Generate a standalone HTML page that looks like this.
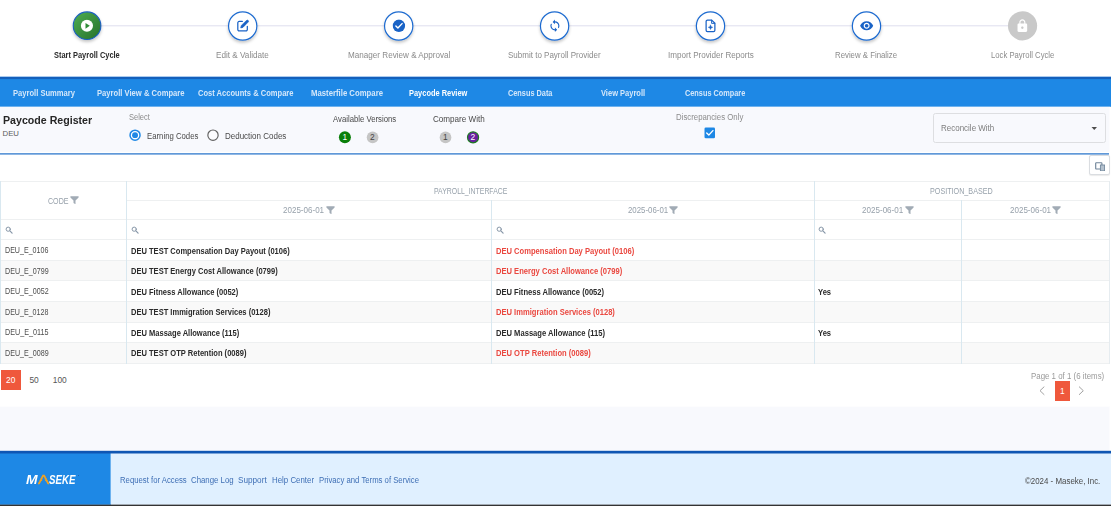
<!DOCTYPE html>
<html lang="en">
<head>
<meta charset="utf-8">
<title>Paycode Register</title>
<style>
html,body{margin:0;padding:0}
body{width:1111px;height:507px;position:relative;overflow:hidden;background:#fff;font-family:"Liberation Sans", sans-serif;-webkit-font-smoothing:antialiased}
.a{position:absolute}
.t{position:absolute;white-space:nowrap;line-height:1;margin:0;transform-origin:0 0;text-decoration:none}
.sb{font-weight:700;color:#2a2a2a}
.sg{color:#8b8b8b}
.nv{font-weight:700;color:#d4e7fa}
.nva{font-weight:700;color:#fff}
.h1{font-weight:700;color:#262626}
.sub{color:#5c5c5c}
.lab{color:#8c8c8c}
.lab2{color:#7d7d7d}
.opt{color:#4a4a4a}
.bw{color:#fff}
.bd{color:#444}
.th{color:#97a1ab}
.tdc{color:#4d4d4d}
.tdb{font-weight:700;color:#2b2b2b}
.tdr{font-weight:700;color:#ea4840}
.pw{color:#fff}
.pg{color:#555}
.pi{color:#9a9a9a}
.fl{color:#3f6fb5}
.fc{color:#4a4a4a}
</style>
</head>
<body>
<header aria-label="Payroll cycle steps">
<svg class="a" style="left:0;top:0" width="1111" height="52" viewBox="0 0 1111 52"><defs><filter id="sh" x="-30%" y="-30%" width="160%" height="180%"><feDropShadow dx="0" dy="1.900" stdDeviation="1.700" flood-color="#000" flood-opacity=".23"/></filter><linearGradient id="gg" x1="0" y1="0" x2="1" y2="1"><stop offset=".1" stop-color="#4aa84e"/><stop offset=".85" stop-color="#2c7a31"/></linearGradient></defs><rect x="87" y="25.300" width="935" height="1" fill="#dfdfee"/><circle cx="87.050" cy="25.700" r="13.800" fill="url(#gg)" stroke="#1b60c0" stroke-width="1.100" filter="url(#sh)"/><svg x="80.45" y="19.30" width="13.00" height="13.00" viewBox="0 0 24 24"><circle cx="12" cy="12" r="11.200" fill="#fff"/><path d="M9.300 6.700v10.600l8-5.300z" fill="#2e8b36"/></svg><circle cx="242.70" cy="26" r="14.150" fill="#fff" stroke="#1d6bd0" stroke-width="1.200" filter="url(#sh)"/><circle cx="398.70" cy="26" r="14.150" fill="#fff" stroke="#1d6bd0" stroke-width="1.200" filter="url(#sh)"/><circle cx="554.60" cy="26" r="14.150" fill="#fff" stroke="#1d6bd0" stroke-width="1.200" filter="url(#sh)"/><circle cx="710.50" cy="26" r="14.150" fill="#fff" stroke="#1d6bd0" stroke-width="1.200" filter="url(#sh)"/><circle cx="866.50" cy="26" r="14.150" fill="#fff" stroke="#1d6bd0" stroke-width="1.200" filter="url(#sh)"/><svg x="236.10" y="19.00" width="13.60" height="13.60" viewBox="0 0 24 24"><g fill="none" stroke="#1a63c6" stroke-linecap="round" stroke-linejoin="round"><path d="M11 4.300H5.400a2.400 2.400 0 0 0-2.400 2.400v12a2.400 2.400 0 0 0 2.400 2.400h12a2.400 2.400 0 0 0 2.400-2.400V13" stroke-width="2.200"/><path d="M18.400 2.600a2.050 2.050 0 0 1 2.900 2.900L12 14.800l-3.800.9.900-3.800z" fill="#1a63c6" stroke-width="1.300"/></g></svg><svg x="392.38" y="19.27" width="13.05" height="13.05" viewBox="0 0 24 24"><circle cx="12" cy="12" r="11.400" fill="#1a63c6"/><path d="M6.400 12.400l3.800 3.800 7.600-8.200" fill="none" stroke="#fff" stroke-width="2.600" stroke-linecap="round" stroke-linejoin="round"/></svg><svg x="548.10" y="19.05" width="13.60" height="13.60" viewBox="0 0 24 24"><path fill="#1a63c6" d="M12 4V1L8 5l4 4V6c3.310 0 6 2.690 6 6 0 1.010-.25 1.970-.7 2.800l1.460 1.460C19.540 15.030 20 13.570 20 12c0-4.420-3.580-8-8-8zm0 14c-3.310 0-6-2.690-6-6 0-1.010.25-1.970.7-2.800L5.240 7.740C4.460 8.970 4 10.430 4 12c0 4.420 3.580 8 8 8v3l4-4-4-4v3z"/></svg><svg x="703.30" y="18.65" width="14.40" height="14.40" viewBox="0 0 24 24"><g fill="none" stroke="#1a63c6" stroke-linecap="round" stroke-linejoin="round"><path d="M14 2.400H7a2.300 2.300 0 0 0-2.300 2.300v14.600a2.300 2.300 0 0 0 2.300 2.300h10a2.300 2.300 0 0 0 2.300-2.300V7.700z" stroke-width="2.100"/><path d="M13.800 2.600v5.300h5.300" stroke-width="1.600"/><path d="M12 10.800l1.050 2.550 2.550 1.050-2.550 1.050L12 18l-1.050-2.550L8.400 14.400l2.550-1.050z" fill="#1a63c6" stroke-width=".9"/></g></svg><svg x="859.50" y="18.55" width="14.30" height="14.30" viewBox="0 0 24 24"><path fill="#1a63c6" d="M12 4.500C7 4.500 2.730 7.610 1 12c1.730 4.390 6 7.500 11 7.500s9.270-3.110 11-7.500c-1.730-4.390-6-7.500-11-7.500zM12 17c-2.760 0-5-2.240-5-5s2.240-5 5-5 5 2.240 5 5-2.240 5-5 5zm0-8c-1.660 0-3 1.340-3 3s1.340 3 3 3 3-1.340 3-3-1.340-3-3-3z"/></svg><circle cx="1022.550" cy="25.800" r="14.600" fill="#c9c9c9"/><svg x="1015.10" y="18.65" width="14.50" height="14.50" viewBox="0 0 24 24"><path fill="#fff" d="M18 8h-1V6c0-2.760-2.240-5-5-5S7 3.240 7 6v2H6c-1.100 0-2 .9-2 2v10c0 1.100.9 2 2 2h12c1.100 0 2-.9 2-2V10c0-1.100-.9-2-2-2zm-6 9c-1.100 0-2-.9-2-2s.9-2 2-2 2 .9 2 2-.9 2-2 2zm3.100-9H8.900V6c0-1.710 1.390-3.100 3.100-3.100 1.710 0 3.100 1.390 3.100 3.100v2z"/></svg></svg>
<span class="t sb" style="left:54.38px;top:50.85px;font-size:8.5px;transform:scaleX(0.8752)">Start Payroll Cycle</span>
<span class="t sg" style="left:216.28px;top:50.85px;font-size:8.5px;transform:scaleX(0.9593)">Edit &amp; Validate</span>
<span class="t sg" style="left:347.58px;top:50.85px;font-size:8.5px;transform:scaleX(0.9547)">Manager Review &amp; Approval</span>
<span class="t sg" style="left:508.33px;top:50.85px;font-size:8.5px;transform:scaleX(0.9422)">Submit to Payroll Provider</span>
<span class="t sg" style="left:667.59px;top:50.85px;font-size:8.5px;transform:scaleX(0.9501)">Import Provider Reports</span>
<span class="t sg" style="left:835.21px;top:50.85px;font-size:8.5px;transform:scaleX(0.9188)">Review &amp; Finalize</span>
<span class="t sg" style="left:990.52px;top:50.85px;font-size:8.5px;transform:scaleX(0.9062)">Lock Payroll Cycle</span>
</header>
<nav aria-label="Payroll views">
<div class="a" style="left:0px;top:77px;width:1111px;height:29px;background:#1e88e5"></div><div class="a" style="left:0px;top:76px;width:1111px;height:1px;background:rgba(30,136,229,0.20)"></div><div class="a" style="left:0px;top:106px;width:1111px;height:1px;background:rgba(30,136,229,0.80)"></div>
<div class="a" style="left:0px;top:77px;width:1111px;height:2px;background:#1460bc"></div><div class="a" style="left:0px;top:76px;width:1111px;height:1px;background:rgba(20,96,188,0.20)"></div><div class="a" style="left:0px;top:79px;width:1111px;height:1px;background:rgba(20,96,188,0.10)"></div>
<a href="#" class="t nv" style="left:12.55px;top:88.90px;font-size:8.4px;transform:scaleX(0.9063)">Payroll Summary</a>
<a href="#" class="t nv" style="left:96.65px;top:88.90px;font-size:8.4px;transform:scaleX(0.9099)">Payroll View &amp; Compare</a>
<a href="#" class="t nv" style="left:198.27px;top:88.90px;font-size:8.4px;transform:scaleX(0.9026)">Cost Accounts &amp; Compare</a>
<a href="#" class="t nv" style="left:310.54px;top:88.90px;font-size:8.4px;transform:scaleX(0.9260)">Masterfile Compare</a>
<a href="#" class="t nva" style="left:409.36px;top:88.90px;font-size:8.4px;transform:scaleX(0.8889)">Paycode Review</a>
<a href="#" class="t nv" style="left:508.48px;top:88.90px;font-size:8.4px;transform:scaleX(0.8752)">Census Data</a>
<a href="#" class="t nv" style="left:601.20px;top:88.90px;font-size:8.4px;transform:scaleX(0.8964)">View Payroll</a>
<a href="#" class="t nv" style="left:685.08px;top:88.90px;font-size:8.4px;transform:scaleX(0.8745)">Census Compare</a>
</nav>
<section aria-label="Paycode Register filters">
<div class="a" style="left:0px;top:107px;width:1110px;height:44px;background:#f8f9fd"></div><div class="a" style="left:0px;top:106px;width:1110px;height:1px;background:rgba(248,249,253,0.20)"></div><div class="a" style="left:0px;top:151px;width:1110px;height:1px;background:rgba(248,249,253,0.90)"></div>
<div class="a" style="left:1109px;top:107px;width:1px;height:45px;background:rgba(255,255,255,.5)"></div>
<div class="a" style="left:0px;top:153px;width:1109px;height:1px;background:#6098d8"></div><div class="a" style="left:0px;top:154px;width:1109px;height:1px;background:rgba(96,152,216,0.70)"></div>
<svg class="a" style="left:0;top:107px" width="1111" height="46" viewBox="0 107 1111 46"><circle cx="135.050" cy="135.150" r="5" fill="#fff" stroke="#1e88e5" stroke-width="1.500"/><circle cx="135.050" cy="135.150" r="2.950" fill="#1e88e5"/><circle cx="213" cy="135.150" r="5.150" fill="#fcfcfe" stroke="#616161" stroke-width="1.150"/><circle cx="344.900" cy="137.300" r="6" fill="#0a7f0a"/><circle cx="372.600" cy="137.400" r="5.850" fill="#c5c5c5"/><circle cx="445.500" cy="137.400" r="5.850" fill="#c5c5c5"/><circle cx="473.050" cy="137.350" r="5.550" fill="#6a1fa0" stroke="#1d7a22" stroke-width="1.200"/><rect x="704.500" y="127.400" width="10.500" height="10.800" rx="1.300" fill="#1e88e5"/><path d="M706.700 133l2.100 2.100 4.100-4.500" fill="none" stroke="#fff" stroke-width="1.350" stroke-linecap="round" stroke-linejoin="round"/></svg>
<div class="a" style="left:933.3px;top:113px;width:172.5px;height:30px;box-sizing:border-box;border:1px solid #dddee1;border-radius:2.500px;background:#f8f9fd"></div>
<svg class="a" style="left:1091px;top:126px" width="7" height="5" viewBox="0 0 7 5"><path d="M.5 1h5.500L3.250 4z" fill="#4d4d4d"/></svg>
<div class="a" style="left:1089.3px;top:155.2px;width:20.3px;height:19.5px;box-sizing:border-box;border:1px solid #dadde1;border-radius:2px;background:#fff;box-shadow:0 .5px 1px rgba(0,0,0,.08)"></div>
<svg class="a" style="left:1094.5px;top:161.8px" width="10.500" height="9.500" viewBox="0 0 10.500 9.500"><rect x=".7" y=".7" width="6.200" height="6.300" rx=".6" fill="#fff" stroke="#6f8499" stroke-width="1.150"/><rect x="5.400" y="3" width="4.200" height="5.900" fill="#b4c1ce" stroke="#72879c" stroke-width=".9"/></svg>
<h1 class="t h1" style="left:3.45px;top:114.75px;font-size:10.7px;transform:scaleX(0.9938)">Paycode Register</h1>
<span class="t sub" style="left:2.50px;top:129.70px;font-size:7.8px">DEU</span>
<span class="t lab" style="left:129.15px;top:112.90px;font-size:8.4px;transform:scaleX(0.8967)">Select</span>
<span class="t opt" style="left:146.80px;top:131.90px;font-size:8.4px;transform:scaleX(0.9272)">Earning Codes</span>
<span class="t opt" style="left:224.98px;top:131.90px;font-size:8.4px;transform:scaleX(0.9549)">Deduction Codes</span>
<span class="t opt" style="left:332.90px;top:114.90px;font-size:8.4px;transform:scaleX(0.9250)">Available Versions</span>
<span class="t opt" style="left:432.82px;top:114.90px;font-size:8.4px;transform:scaleX(0.9676)">Compare With</span>
<span class="t lab" style="left:675.80px;top:112.90px;font-size:8.4px;transform:scaleX(0.9333)">Discrepancies Only</span>
<span class="t lab2" style="left:941.18px;top:123.90px;font-size:8.4px;transform:scaleX(0.9541)">Reconcile With</span>
<span class="t bw" style="left:342.40px;top:132.90px;font-size:8.4px">1</span>
<span class="t bd" style="left:370.12px;top:132.90px;font-size:8.4px">2</span>
<span class="t bd" style="left:442.90px;top:132.90px;font-size:8.4px">1</span>
<span class="t bw" style="left:470.62px;top:132.90px;font-size:8.4px">2</span>
</section>
<section aria-label="Paycode comparison grid">
<div class="a" style="left:1px;top:261px;width:1108px;height:19px;background:#f9f9f9"></div>
<div class="a" style="left:1px;top:302px;width:1108px;height:20px;background:#f9f9f9"></div>
<div class="a" style="left:1px;top:343px;width:1108px;height:20px;background:#f9f9f9"></div>
<div class="a" style="left:0px;top:181px;width:1110px;height:1px;background:#eef0f1"></div>
<div class="a" style="left:126px;top:200px;width:984px;height:1px;background:#eef0f1"></div>
<div class="a" style="left:0px;top:219px;width:1110px;height:1px;background:#eef0f1"></div>
<div class="a" style="left:0px;top:239px;width:1110px;height:1px;background:#eef0f1"></div>
<div class="a" style="left:0px;top:260px;width:1110px;height:1px;background:#eef0f1"></div>
<div class="a" style="left:0px;top:280px;width:1110px;height:1px;background:#eef0f1"></div>
<div class="a" style="left:0px;top:301px;width:1110px;height:1px;background:#eef0f1"></div>
<div class="a" style="left:0px;top:322px;width:1110px;height:1px;background:#eef0f1"></div>
<div class="a" style="left:0px;top:342px;width:1110px;height:1px;background:#eef0f1"></div>
<div class="a" style="left:0px;top:363px;width:1110px;height:1px;background:#eef0f1"></div>
<div class="a" style="left:0px;top:181px;width:1px;height:183px;background:#d9e8f0"></div>
<div class="a" style="left:126px;top:181px;width:1px;height:183px;background:#d9e8f0"></div>
<div class="a" style="left:491px;top:200px;width:1px;height:164px;background:#d9e8f0"></div>
<div class="a" style="left:814px;top:181px;width:1px;height:183px;background:#d9e8f0"></div>
<div class="a" style="left:961px;top:200px;width:1px;height:164px;background:#d9e8f0"></div>
<div class="a" style="left:1109px;top:181px;width:1px;height:183px;background:#e6ecf0"></div>
<svg class="a" style="left:70.0px;top:195.9px" width="9" height="8.600" viewBox="0 0 9 8.600"><path d="M.4 .3h8.200v1.100L5.500 4.600v3.700L3.500 7V4.600L.4 1.400z" fill="#a1abb5"/></svg>
<svg class="a" style="left:325.8px;top:205.6px" width="9" height="8.600" viewBox="0 0 9 8.600"><path d="M.4 .3h8.200v1.100L5.500 4.600v3.700L3.500 7V4.600L.4 1.400z" fill="#a1abb5"/></svg>
<svg class="a" style="left:669.4px;top:205.6px" width="9" height="8.600" viewBox="0 0 9 8.600"><path d="M.4 .3h8.200v1.100L5.500 4.600v3.700L3.500 7V4.600L.4 1.400z" fill="#a1abb5"/></svg>
<svg class="a" style="left:904.9px;top:205.6px" width="9" height="8.600" viewBox="0 0 9 8.600"><path d="M.4 .3h8.200v1.100L5.500 4.600v3.700L3.500 7V4.600L.4 1.400z" fill="#a1abb5"/></svg>
<svg class="a" style="left:1052.3px;top:205.6px" width="9" height="8.600" viewBox="0 0 9 8.600"><path d="M.4 .3h8.200v1.100L5.500 4.600v3.700L3.500 7V4.600L.4 1.400z" fill="#a1abb5"/></svg>
<svg class="a" style="left:5.4px;top:226.100px" width="8.500" height="8.500" viewBox="0 0 8.500 8.500" fill="none" stroke="#8797a8" stroke-linecap="round"><circle cx="3.200" cy="3.200" r="2.100" stroke-width="1"/><path d="M4.900 4.900l2.200 2.200" stroke-width="1.200"/></svg>
<svg class="a" style="left:130.5px;top:226.100px" width="8.500" height="8.500" viewBox="0 0 8.500 8.500" fill="none" stroke="#8797a8" stroke-linecap="round"><circle cx="3.200" cy="3.200" r="2.100" stroke-width="1"/><path d="M4.900 4.900l2.200 2.200" stroke-width="1.200"/></svg>
<svg class="a" style="left:496.1px;top:226.100px" width="8.500" height="8.500" viewBox="0 0 8.500 8.500" fill="none" stroke="#8797a8" stroke-linecap="round"><circle cx="3.200" cy="3.200" r="2.100" stroke-width="1"/><path d="M4.900 4.900l2.200 2.200" stroke-width="1.200"/></svg>
<svg class="a" style="left:818.0px;top:226.100px" width="8.500" height="8.500" viewBox="0 0 8.500 8.500" fill="none" stroke="#8797a8" stroke-linecap="round"><circle cx="3.200" cy="3.200" r="2.100" stroke-width="1"/><path d="M4.900 4.900l2.200 2.200" stroke-width="1.200"/></svg>
<span class="t th" style="left:48.27px;top:197.50px;font-size:8.2px;transform:scaleX(0.8659)">CODE</span>
<span class="t th" style="left:433.57px;top:187.50px;font-size:8.2px;transform:scaleX(0.8430)">PAYROLL_INTERFACE</span>
<span class="t th" style="left:930.24px;top:187.50px;font-size:8.2px;transform:scaleX(0.8783)">POSITION_BASED</span>
<span class="t th" style="left:283.41px;top:206.50px;font-size:8.2px;transform:scaleX(0.9805)">2025-06-01</span>
<span class="t th" style="left:627.62px;top:206.50px;font-size:8.2px;transform:scaleX(0.9585)">2025-06-01</span>
<span class="t th" style="left:862.11px;top:206.50px;font-size:8.2px;transform:scaleX(0.9854)">2025-06-01</span>
<span class="t th" style="left:1009.91px;top:206.50px;font-size:8.2px;transform:scaleX(0.9805)">2025-06-01</span>
<span class="t tdc" style="left:4.76px;top:245.90px;font-size:8.4px;transform:scaleX(0.8478)">DEU_E_0106</span>
<span class="t tdb" style="left:130.78px;top:246.60px;font-size:9.0px;transform:scaleX(0.8371)">DEU TEST Compensation Day Payout (0106)</span>
<span class="t tdr" style="left:496.38px;top:246.60px;font-size:9.0px;transform:scaleX(0.8429)">DEU Compensation Day Payout (0106)</span>
<span class="t tdc" style="left:4.76px;top:266.90px;font-size:8.4px;transform:scaleX(0.8520)">DEU_E_0799</span>
<span class="t tdb" style="left:130.78px;top:266.60px;font-size:9.0px;transform:scaleX(0.8371)">DEU TEST Energy Cost Allowance (0799)</span>
<span class="t tdr" style="left:496.38px;top:266.60px;font-size:9.0px;transform:scaleX(0.8429)">DEU Energy Cost Allowance (0799)</span>
<span class="t tdc" style="left:4.76px;top:286.90px;font-size:8.4px;transform:scaleX(0.8520)">DEU_E_0052</span>
<span class="t tdb" style="left:130.78px;top:287.60px;font-size:9.0px;transform:scaleX(0.8371)">DEU Fitness Allowance (0052)</span>
<span class="t tdb" style="left:496.38px;top:287.60px;font-size:9.0px;transform:scaleX(0.8429)">DEU Fitness Allowance (0052)</span>
<span class="t tdb" style="left:818.39px;top:287.60px;font-size:9.0px;transform:scaleX(0.8429)">Yes</span>
<span class="t tdc" style="left:4.76px;top:307.90px;font-size:8.4px;transform:scaleX(0.8478)">DEU_E_0128</span>
<span class="t tdb" style="left:130.78px;top:307.60px;font-size:9.0px;transform:scaleX(0.8371)">DEU TEST Immigration Services (0128)</span>
<span class="t tdr" style="left:496.38px;top:307.60px;font-size:9.0px;transform:scaleX(0.8429)">DEU Immigration Services (0128)</span>
<span class="t tdc" style="left:4.75px;top:327.90px;font-size:8.4px;transform:scaleX(0.8606)">DEU_E_0115</span>
<span class="t tdb" style="left:130.78px;top:328.60px;font-size:9.0px;transform:scaleX(0.8371)">DEU Massage Allowance (115)</span>
<span class="t tdb" style="left:496.38px;top:328.60px;font-size:9.0px;transform:scaleX(0.8429)">DEU Massage Allowance (115)</span>
<span class="t tdb" style="left:818.39px;top:328.60px;font-size:9.0px;transform:scaleX(0.8429)">Yes</span>
<span class="t tdc" style="left:4.76px;top:348.90px;font-size:8.4px;transform:scaleX(0.8520)">DEU_E_0089</span>
<span class="t tdb" style="left:130.78px;top:348.60px;font-size:9.0px;transform:scaleX(0.8371)">DEU TEST OTP Retention (0089)</span>
<span class="t tdr" style="left:496.38px;top:348.60px;font-size:9.0px;transform:scaleX(0.8429)">DEU OTP Retention (0089)</span>
</section>
<section aria-label="Paging">
<div class="a" style="left:.8px;top:370.2px;width:20.1px;height:20.2px;background:#ef583c"></div>
<div class="a" style="left:1054.6px;top:381.3px;width:15.6px;height:20.1px;background:#ef583c"></div>
<svg class="a" style="left:1038.9px;top:386px" width="6.500" height="10" viewBox="0 0 6.500 10"><path d="M5.300 .6L1 4.700l4.300 4.100" fill="none" stroke="#a2a2a2" stroke-width="1"/></svg>
<svg class="a" style="left:1077.9px;top:386px" width="6.500" height="10" viewBox="0 0 6.500 10"><path d="M1 .6L5.300 4.700 1 8.800" fill="none" stroke="#a2a2a2" stroke-width="1"/></svg>
<span class="t pw" style="left:6.10px;top:375.90px;font-size:8.4px">20</span>
<span class="t pg" style="left:29.40px;top:375.90px;font-size:8.4px">50</span>
<span class="t pg" style="left:52.75px;top:375.90px;font-size:8.4px">100</span>
<span class="t pi" style="left:1031.38px;top:372.50px;font-size:8.2px;transform:scaleX(0.9632)">Page 1 of 1 (6 items)</span>
<span class="t pw" style="left:1059.90px;top:386.90px;font-size:8.4px">1</span>
</section>
<footer>
<div class="a" style="left:0px;top:407px;width:1110px;height:44px;background:#f8f9fd"></div><div class="a" style="left:0px;top:406px;width:1110px;height:1px;background:rgba(248,249,253,0.30)"></div>
<div class="a" style="left:1109px;top:407px;width:1px;height:44px;background:rgba(255,255,255,.5)"></div>
<div class="a" style="left:0px;top:451px;width:1111px;height:53px;background:#e0f0ff"></div><div class="a" style="left:0px;top:504px;width:1111px;height:1px;background:rgba(224,240,255,0.70)"></div>
<div class="a" style="left:0px;top:451px;width:110px;height:53px;background:#1e88e5"></div><div class="a" style="left:0px;top:504px;width:110px;height:1px;background:rgba(30,136,229,0.70)"></div>
<div class="a" style="left:110px;top:453px;width:1px;height:52px;background:rgba(30,136,229,.6)"></div>
<div class="a" style="left:0px;top:451px;width:1111px;height:2px;background:#0f56b3"></div><div class="a" style="left:0px;top:450px;width:1111px;height:1px;background:rgba(15,86,179,0.20)"></div><div class="a" style="left:0px;top:453px;width:1111px;height:1px;background:rgba(15,86,179,0.50)"></div>
<div class="a" style="left:0px;top:504px;width:1111px;height:1px;background:rgba(0,0,0,0.30)"></div><div class="a" style="left:0px;top:505px;width:1111px;height:1px;background:rgba(0,0,0,0.80)"></div>
<div class="a" style="left:0;top:474.00px;font-size:12.200px;line-height:1;font-weight:700;font-style:italic;color:#fff;white-space:nowrap"><span class="a" style="left:25.500px;top:0;transform-origin:0 0;transform:scaleX(1.140)">M</span><span class="a" style="left:37.500px;top:0;transform-origin:0 0;transform:scaleX(1.370);color:#f8a21a;-webkit-text-stroke:.4px #f8a21a;font-weight:400;font-style:normal;clip-path:polygon(0 0,100% 0,100% 100%,96.200% 100%,50% 33.500%,3.800% 100%,0 100%)">A</span><span class="a" style="left:48.700px;top:0;transform-origin:0 0;transform:scaleX(.795)">SEKE</span></div>
<div class="a" style="left:77.800px;top:475.200px;width:1px;height:1px;background:#2a5fa8"></div>
<a href="#" class="t fl" style="left:119.80px;top:475.95px;font-size:8.3px;transform:scaleX(0.9333)">Request for Access</a>
<a href="#" class="t fl" style="left:191.13px;top:475.95px;font-size:8.3px;transform:scaleX(0.9424)">Change Log</a>
<a href="#" class="t fl" style="left:238.41px;top:475.95px;font-size:8.3px;transform:scaleX(0.9860)">Support</a>
<a href="#" class="t fl" style="left:271.59px;top:475.95px;font-size:8.3px;transform:scaleX(0.9494)">Help Center</a>
<a href="#" class="t fl" style="left:318.50px;top:475.95px;font-size:8.3px;transform:scaleX(0.9318)">Privacy and Terms of Service</a>
<span class="t fc" style="left:1025.40px;top:476.90px;font-size:8.4px;transform:scaleX(0.9443)">©2024 - Maseke, Inc.</span>
</footer>
</body>
</html>
